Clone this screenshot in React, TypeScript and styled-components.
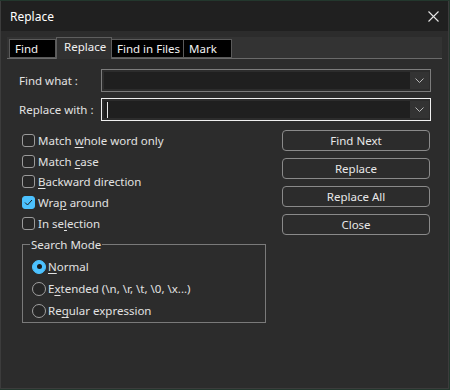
import React from "react";
import styled, { createGlobalStyle } from "styled-components";

const Global = createGlobalStyle`
  html, body { margin: 0; padding: 0; background: #23372d; }
  body { font-family: "Segoe UI", "Noto Sans", "DejaVu Sans", sans-serif; font-size: 11.5px; color: #e4e4e4; }
  * { box-sizing: border-box; }
`;

const Window = styled.div`
  width: 449px;
  height: 388px;
  margin-top: 1px;
  background: #2c2c2c;
  border: 1px solid #3c3c3c;
  border-top: none;
  display: flex;
  flex-direction: column;
`;

const TitleBar = styled.div`
  height: 30px;
  background: #202020;
  display: flex;
  align-items: center;
  justify-content: space-between;
  padding: 0 9px 0 9px;
  color: #ffffff;
  font-size: 12px;
`;

const CloseIcon = () => (
  <svg width="11" height="11" viewBox="0 0 11 11">
    <path d="M0.5 0.5 L10.5 10.5 M10.5 0.5 L0.5 10.5" stroke="#e6e6e6" strokeWidth="1.1" />
  </svg>
);

const Body = styled.div`
  flex: 1;
  padding: 6px 6px 0 6px;
  display: flex;
  flex-direction: column;
`;

const TabStrip = styled.div`
  height: 22px;
  background: #333333;
  border-bottom: 1px solid #6a6a6a;
  display: flex;
  align-items: flex-end;
  padding-left: 2px;
`;

const Tab = styled.div<{ $active?: boolean; $first?: boolean; $w: number }>`
  width: ${(p) => p.$w}px;
  height: ${(p) => (p.$active ? 22 : 19)}px;
  margin-bottom: ${(p) => (p.$active ? -1 : 0)}px;
  background: ${(p) => (p.$active ? "#313131" : "#000000")};
  border: 1px solid ${(p) => (p.$active ? "#5e5e5e" : "#5a5a5a")};
  border-bottom: ${(p) => (p.$active ? "none" : "1px solid #5a5a5a")};
  border-left-width: ${(p) => (p.$first || p.$active ? 1 : 0)}px;
  color: #f2f2f2;
  display: flex;
  align-items: ${(p) => (p.$active ? "flex-start" : "center")};
  padding: ${(p) => (p.$active ? "1px 0 0 7px" : "0 0 0 5px")};
  font-size: 11.5px;
  line-height: 16px;
  white-space: nowrap;
`;

const Form = styled.div`
  padding: 10px 0 0 12px;
  display: flex;
  flex-direction: column;
  gap: 6px;
`;

const FieldRow = styled.div`
  display: flex;
  align-items: center;
  height: 23px;
`;

const Label = styled.div`
  width: 82px;
  color: #e2e2e2;
`;

const Combo = styled.div<{ $focus?: boolean }>`
  width: 330px;
  height: 23px;
  border: 1px solid ${(p) => (p.$focus ? "#f0f0f0" : "#7c7c7c")};
  padding: 2px 1px 2px 2px;
  display: flex;
`;

const ComboField = styled.div`
  flex: 1;
  background: #1f1f1f;
  position: relative;
`;

const Caret = styled.div`
  position: absolute;
  left: 3px;
  top: 1px;
  width: 1px;
  height: 16px;
  background: #e8e8e8;
`;

const ComboButton = styled.div`
  width: 19px;
  background: #333333;
  display: flex;
  align-items: center;
  justify-content: center;
`;

const Chevron = () => (
  <svg width="9" height="5" viewBox="0 0 9 5">
    <path d="M0.5 0.5 L4.5 4.5 L8.5 0.5" stroke="#b8b8b8" strokeWidth="1" fill="none" />
  </svg>
);

const Lower = styled.div`
  display: flex;
  justify-content: space-between;
  padding: 9px 12px 0 15px;
`;

const LeftCol = styled.div`
  display: flex;
  flex-direction: column;
`;

const Checks = styled.div`
  display: flex;
  flex-direction: column;
`;

const CheckRow = styled.div`
  height: 20.75px;
  display: flex;
  align-items: center;
  gap: 3px;
  color: #e2e2e2;
  white-space: nowrap;
`;

const Box = styled.div<{ $checked?: boolean }>`
  width: 13px;
  height: 13px;
  border-radius: 3px;
  border: 1px solid ${(p) => (p.$checked ? "#4cc2ff" : "#9a9a9a")};
  background: ${(p) => (p.$checked ? "#4cc2ff" : "#272727")};
  display: flex;
  align-items: center;
  justify-content: center;
`;

const Check = () => (
  <svg width="9" height="7" viewBox="0 0 9 7">
    <path d="M1 3.5 L3.5 6 L8 1" stroke="#1c1c1c" strokeWidth="1" fill="none" />
  </svg>
);

const U = styled.span`
  text-decoration: underline;
  text-underline-offset: 2px;
  text-decoration-thickness: 1px;
`;

const Group = styled.fieldset`
  margin: 5px 0 0 0;
  width: 244px;
  height: 84px;
  border: 1px solid #7a7a7a;
  padding: 5px 0 0 9px;
  display: flex;
  flex-direction: column;
`;

const Legend = styled.legend`
  padding: 0 1px;
  margin-left: -2px;
  font-size: 11.5px;
  color: #e2e2e2;
  line-height: 12px;
`;

const RadioRow = styled.div`
  height: 22px;
  display: flex;
  align-items: center;
  gap: 2px;
  color: #e2e2e2;
  white-space: nowrap;
`;

const Radio = styled.div<{ $on?: boolean }>`
  width: 14px;
  height: 14px;
  border-radius: 50%;
  border: 1px solid ${(p) => (p.$on ? "#4cc2ff" : "#a0a0a0")};
  background: ${(p) => (p.$on ? "#4cc2ff" : "#262626")};
  display: flex;
  align-items: center;
  justify-content: center;
`;

const Dot = styled.div`
  width: 5px;
  height: 5px;
  border-radius: 50%;
  background: #1a1a1a;
`;

const Buttons = styled.div`
  display: flex;
  flex-direction: column;
  gap: 7px;
`;

const Button = styled.div`
  width: 148px;
  height: 21px;
  border: 1px solid #8a8a8a;
  border-radius: 4px;
  display: flex;
  align-items: center;
  justify-content: center;
  color: #e8e8e8;
`;

export default function App() {
  return (
    <>
      <Global />
      <Window>
        <TitleBar>
          <span>Replace</span>
          <CloseIcon />
        </TitleBar>
        <Body>
          <TabStrip>
            <Tab $w={47} $first>Find</Tab>
            <Tab $w={56} $active>Replace</Tab>
            <Tab $w={72}>Find in Files</Tab>
            <Tab $w={48}>Mark</Tab>
          </TabStrip>
          <Form>
            <FieldRow>
              <Label>Find what :</Label>
              <Combo>
                <ComboField />
                <ComboButton><Chevron /></ComboButton>
              </Combo>
            </FieldRow>
            <FieldRow>
              <Label>Replace with :</Label>
              <Combo $focus>
                <ComboField><Caret /></ComboField>
                <ComboButton><Chevron /></ComboButton>
              </Combo>
            </FieldRow>
          </Form>
          <Lower>
            <LeftCol>
              <Checks>
                <CheckRow><Box /><span>Match <U>w</U>hole word only</span></CheckRow>
                <CheckRow><Box /><span>Match <U>c</U>ase</span></CheckRow>
                <CheckRow><Box /><span><U>B</U>ackward direction</span></CheckRow>
                <CheckRow><Box $checked><Check /></Box><span>Wra<U>p</U> around</span></CheckRow>
                <CheckRow><Box /><span>In se<U>l</U>ection</span></CheckRow>
              </Checks>
              <Group>
                <Legend>Search Mode</Legend>
                <RadioRow><Radio $on><Dot /></Radio><span><U>N</U>ormal</span></RadioRow>
                <RadioRow><Radio /><span>E<U>x</U>tended (\n, \r, \t, \0, \x...)</span></RadioRow>
                <RadioRow><Radio /><span>Re<U>g</U>ular expression</span></RadioRow>
              </Group>
            </LeftCol>
            <Buttons>
              <Button>Find Next</Button>
              <Button>Replace</Button>
              <Button>Replace All</Button>
              <Button>Close</Button>
            </Buttons>
          </Lower>
        </Body>
      </Window>
    </>
  );
}
